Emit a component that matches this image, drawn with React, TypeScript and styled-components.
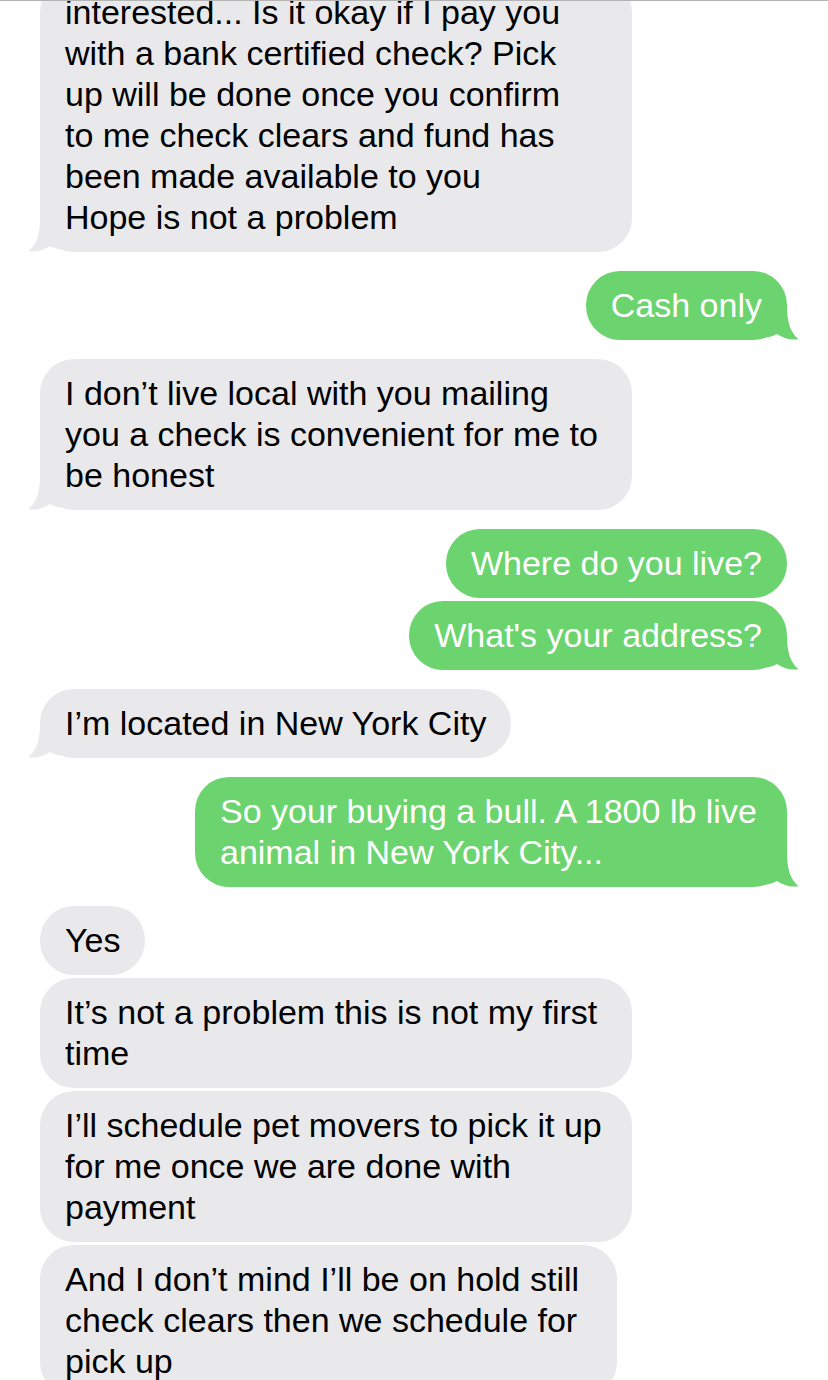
import React from "react";
import styled, { createGlobalStyle } from "styled-components";

const GlobalStyle = createGlobalStyle`
  html, body {
    margin: 0;
    padding: 0;
    background: #ffffff;
  }
  body {
    font-family: "Liberation Sans", Arial, Helvetica, sans-serif;
    -webkit-font-smoothing: antialiased;
  }
`;

const GRAY = "#e9e9eb";
const GREEN = "#6bd46f";

type Side = "in" | "out";

const Page = styled.div`
  width: 828px;
  height: 1380px;
  overflow: hidden;
  box-sizing: border-box;
  border-top: 1px solid #b4b4b4;
  background: #ffffff;
`;

const Thread = styled.div`
  display: flex;
  flex-direction: column;
  padding: 0 41px 0 40px;
  margin-top: -23px;
`;

const Group = styled.div<{ $side: Side; $first?: boolean }>`
  display: flex;
  flex-direction: column;
  gap: 3px;
  align-items: ${(p) => (p.$side === "in" ? "flex-start" : "flex-end")};
  margin-top: ${(p) => (p.$first ? "0" : "19px")};
`;

const Bubble = styled.div<{ $side: Side; $w?: number }>`
  position: relative;
  box-sizing: border-box;
  width: ${(p) => (p.$w ? `${p.$w}px` : "auto")};
  padding: 14px 25px;
  border-radius: 34px;
  background: ${(p) => (p.$side === "in" ? GRAY : GREEN)};
  color: ${(p) => (p.$side === "in" ? "#000000" : "#ffffff")};
  font-size: 34px;
  line-height: 41px;
  white-space: nowrap;
`;

const BubbleText = styled.span`
  position: relative;
  display: block;
`;

const TailSvg = styled.svg<{ $side: Side }>`
  position: absolute;
  bottom: 0;
  width: 34px;
  height: 34px;
  ${(p) =>
    p.$side === "out"
      ? "right: -12px;"
      : "left: -12px; transform: scaleX(-1);"}
`;

const Tail: React.FC<{ side: Side }> = ({ side }) => (
  <TailSvg $side={side} viewBox="0 0 34 34" aria-hidden="true">
    <path
      d="M0 0 H22 C22 17 26 27 33.5 33.2 C26 34.6 18 32.2 12 28 C8 30.2 4 31.2 0 31.6 Z"
      fill={side === "in" ? GRAY : GREEN}
    />
  </TailSvg>
);

type Msg = { lines: string[]; w?: number };
type GroupData = { side: Side; tail: boolean; msgs: Msg[] };

const thread: GroupData[] = [
  {
    side: "in",
    tail: true,
    msgs: [
      {
        w: 592,
        lines: [
          "some text above",
          "interested... Is it okay if I pay you",
          "with a bank certified check? Pick",
          "up will be done once you confirm",
          "to me check clears and fund has",
          "been made available to you",
          "Hope is not a problem",
        ].slice(1),
      },
    ],
  },
  { side: "out", tail: true, msgs: [{ lines: ["Cash only"] }] },
  {
    side: "in",
    tail: true,
    msgs: [
      {
        w: 592,
        lines: [
          "I don\u2019t live local with you mailing",
          "you a check is convenient for me to",
          "be honest",
        ],
      },
    ],
  },
  {
    side: "out",
    tail: true,
    msgs: [
      { lines: ["Where do you live?"] },
      { lines: ["What's your address?"] },
    ],
  },
  {
    side: "in",
    tail: true,
    msgs: [{ lines: ["I\u2019m located in New York City"] }],
  },
  {
    side: "out",
    tail: true,
    msgs: [
      {
        w: 592,
        lines: [
          "So your buying a bull. A 1800 lb live",
          "animal in New York City...",
        ],
      },
    ],
  },
  {
    side: "in",
    tail: false,
    msgs: [
      { lines: ["Yes"] },
      {
        w: 592,
        lines: ["It\u2019s not a problem this is not my first", "time"],
      },
      {
        w: 592,
        lines: [
          "I\u2019ll schedule pet movers to pick it up",
          "for me once we are done with",
          "payment",
        ],
      },
      {
        w: 577,
        lines: [
          "And I don\u2019t mind I\u2019ll be on hold still",
          "check clears then we schedule for",
          "pick up",
        ],
      },
    ],
  },
];

export default function App() {
  return (
    <>
      <GlobalStyle />
      <Page>
        <Thread>
          {thread.map((g, gi) => (
            <Group key={gi} $side={g.side} $first={gi === 0}>
              {g.msgs.map((m, mi) => {
                const last = mi === g.msgs.length - 1;
                return (
                  <Bubble key={mi} $side={g.side} $w={m.w}>
                    {g.tail && last && <Tail side={g.side} />}
                    <BubbleText>
                      {m.lines.map((l, li) => (
                        <React.Fragment key={li}>
                          {li > 0 && <br />}
                          {l}
                        </React.Fragment>
                      ))}
                    </BubbleText>
                  </Bubble>
                );
              })}
            </Group>
          ))}
        </Thread>
      </Page>
    </>
  );
}
